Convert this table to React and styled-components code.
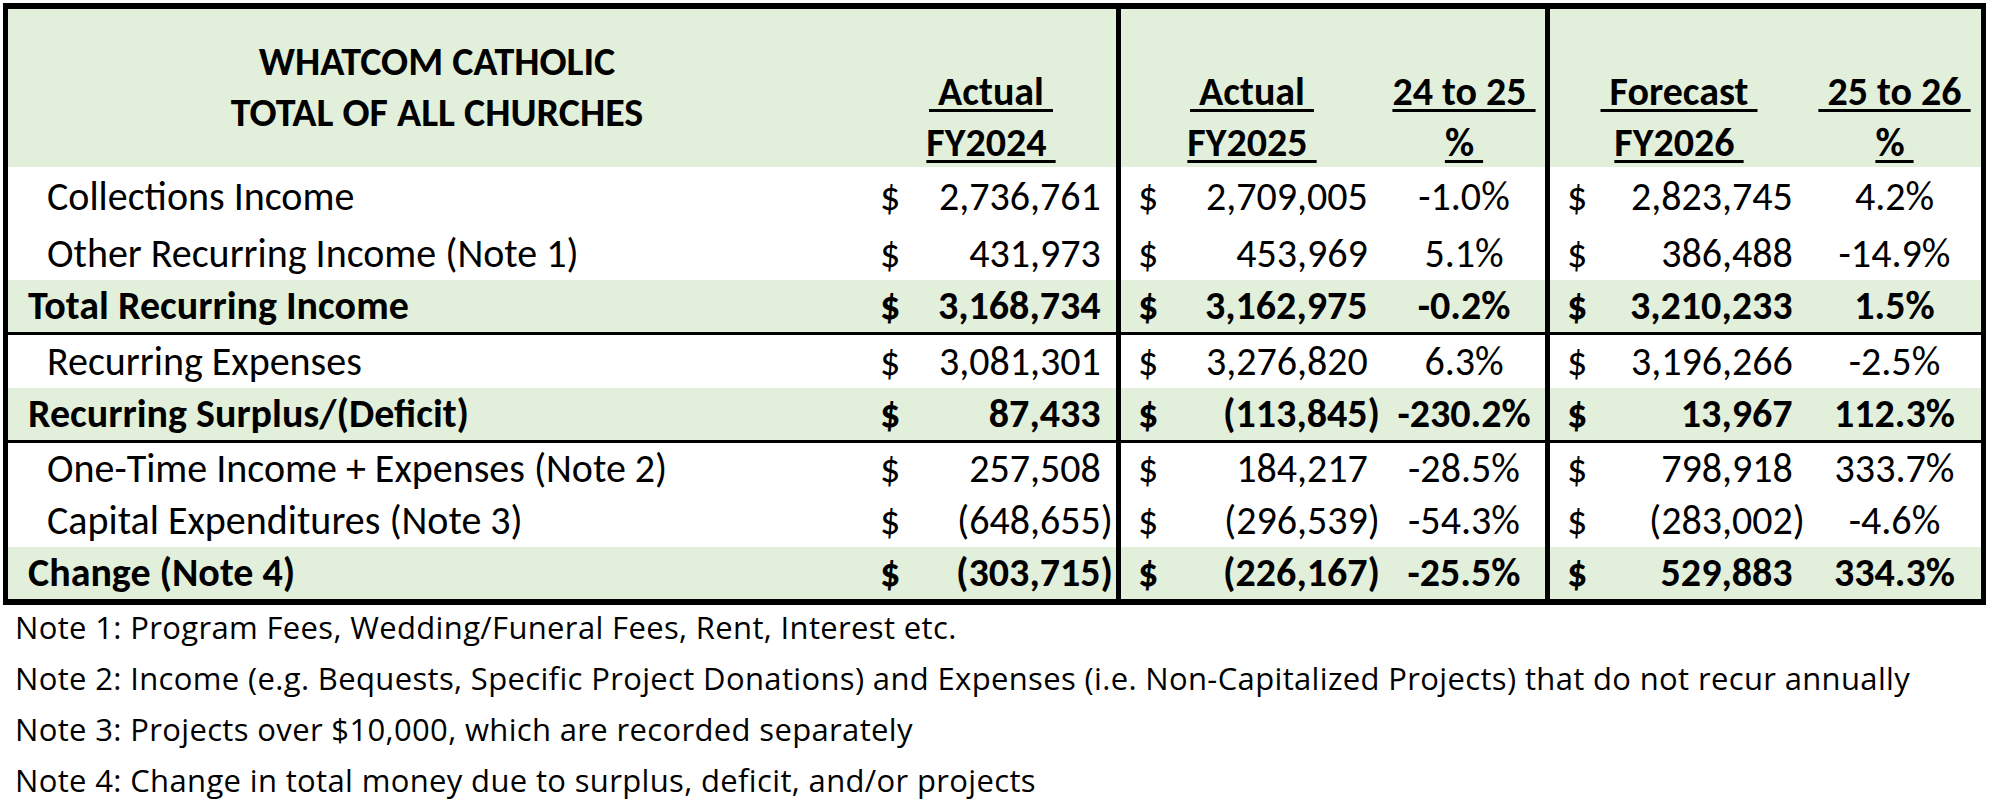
import styled, { createGlobalStyle } from 'styled-components'

// Budget summary sheet, drawn like the Excel print it came from

const GREEN = '#e2efda'
const COLS = '858px 250px 267px 162px 263px 173px'

const GlobalStyle = createGlobalStyle`
  *, *::before, *::after { box-sizing: border-box; }
  html, body {
    margin: 0;
    padding: 0;
    background: #ffffff;
  }
  body {
    font-family: Carlito, Calibri, Lato, "Liberation Sans", sans-serif;
    color: #000000;
  }
`

const Sheet = styled.div`
  width: 1990px;
  height: 810px;
  padding: 3px 0 0 3px;
  overflow: hidden;
`

const Table = styled.div`
  width: 1983px;
  border: 5px solid #000;
  border-top-width: 6px;
  border-bottom-width: 6px;
`

const HeadRow = styled.div`
  display: grid;
  grid-template-columns: ${COLS};
  height: 158px;
  background: ${GREEN};
  font-size: 40px;
  font-weight: 700;
  line-height: 51px;
`

const Title = styled.div`
  padding-top: 27px;
  text-align: center;
`

const ColHead = styled.div`
  padding-top: 57px;
  text-align: center;
  border-left: ${p => (p.$divider ? '5px solid #000' : 'none')};
`

const U = styled.span`
  white-space: pre;
  text-decoration: underline;
  text-decoration-thickness: 3px;
  text-underline-offset: 4px;
`

// cells sit on the bottom of the row, as Excel does by default
const Row = styled.div`
  display: grid;
  grid-template-columns: ${COLS};
  align-items: end;
  height: ${p => p.$h}px;
  padding-bottom: 6px;
  background: ${p => (p.$total ? GREEN : '#ffffff')};
  border-bottom: ${p => (p.$rule ? '3px solid #000' : 'none')};
  font-size: 40px;
  line-height: 40px;
  font-weight: ${p => (p.$total ? 700 : 400)};
  white-space: nowrap;
`

const Label = styled.div`
  padding-left: ${p => (p.$total ? 20 : 39)}px;
`

const Money = styled.div`
  display: flex;
  justify-content: space-between;
  padding: 0 3px 0 ${p => (p.$divider ? 17 : 14)}px;
  border-left: ${p => (p.$divider ? '5px solid #000' : 'none')};
  align-self: stretch;
  align-items: flex-end;
  margin-bottom: -6px;
  padding-bottom: 6px;
`

const Paren = styled.span`
  visibility: ${p => (p.$show ? 'visible' : 'hidden')};
`

const Pct = styled.div`
  text-align: center;
`

const Notes = styled.div`
  margin-top: -3px;
  padding-left: 12px;
  font-family: "Open Sans", "Noto Sans", sans-serif;
  font-size: 31px;
  letter-spacing: 0.35px;
  line-height: 51px;
  white-space: nowrap;
`

const rows = [
  { label: 'Collections Income', h: 56, v: ['2,736,761', '2,709,005', '-1.0%', '2,823,745', '4.2%'] },
  { label: 'Other Recurring Income (Note 1)', h: 57, v: ['431,973', '453,969', '5.1%', '386,488', '-14.9%'] },
  { label: 'Total Recurring Income', h: 55, total: true, rule: true, v: ['3,168,734', '3,162,975', '-0.2%', '3,210,233', '1.5%'] },
  { label: 'Recurring Expenses', h: 53, v: ['3,081,301', '3,276,820', '6.3%', '3,196,266', '-2.5%'] },
  { label: 'Recurring Surplus/(Deficit)', h: 55, total: true, rule: true, v: ['87,433', '(113,845)', '-230.2%', '13,967', '112.3%'] },
  { label: 'One-Time Income + Expenses (Note 2)', h: 52, v: ['257,508', '184,217', '-28.5%', '798,918', '333.7%'] },
  { label: 'Capital Expenditures (Note 3)', h: 52, v: ['(648,655)', '(296,539)', '-54.3%', '(283,002)', '-4.6%'] },
  { label: 'Change (Note 4)', h: 52, total: true, v: ['(303,715)', '(226,167)', '-25.5%', '529,883', '334.3%'] },
]

const notes = [
  'Note 1: Program Fees, Wedding/Funeral Fees, Rent, Interest etc.',
  'Note 2: Income (e.g. Bequests, Specific Project Donations) and Expenses (i.e. Non-Capitalized Projects) that do not recur annually',
  'Note 3: Projects over $10,000, which are recorded separately',
  'Note 4: Change in total money due to surplus, deficit, and/or projects',
]

function Amount({ value, divider }) {
  const neg = value.startsWith('(')
  const digits = neg ? value.slice(0, -1) : value
  return (
    <Money $divider={divider}>
      <span>$</span>
      <span>
        {digits}
        <Paren $show={neg}>)</Paren>
      </span>
    </Money>
  )
}

export default function App() {
  return (
    <Sheet>
      <GlobalStyle />
      <Table>
        <HeadRow>
          <Title>
            WHATCOM CATHOLIC
            <br />
            TOTAL OF ALL CHURCHES
          </Title>
          <ColHead>
            <U> Actual </U>
            <br />
            <U>FY2024 </U>
          </ColHead>
          <ColHead $divider>
            <U> Actual </U>
            <br />
            <U>FY2025 </U>
          </ColHead>
          <ColHead>
            <U>24 to 25 </U>
            <br />
            <U>% </U>
          </ColHead>
          <ColHead $divider>
            <U> Forecast </U>
            <br />
            <U>FY2026 </U>
          </ColHead>
          <ColHead>
            <U> 25 to 26 </U>
            <br />
            <U>% </U>
          </ColHead>
        </HeadRow>

        {rows.map(r => (
          <Row key={r.label} $h={r.h} $total={r.total} $rule={r.rule}>
            <Label $total={r.total}>{r.label}</Label>
            <Amount value={r.v[0]} />
            <Amount value={r.v[1]} divider />
            <Pct>{r.v[2]}</Pct>
            <Amount value={r.v[3]} divider />
            <Pct>{r.v[4]}</Pct>
          </Row>
        ))}
      </Table>

      <Notes>
        {notes.map(n => (
          <div key={n}>{n}</div>
        ))}
      </Notes>
    </Sheet>
  )
}
